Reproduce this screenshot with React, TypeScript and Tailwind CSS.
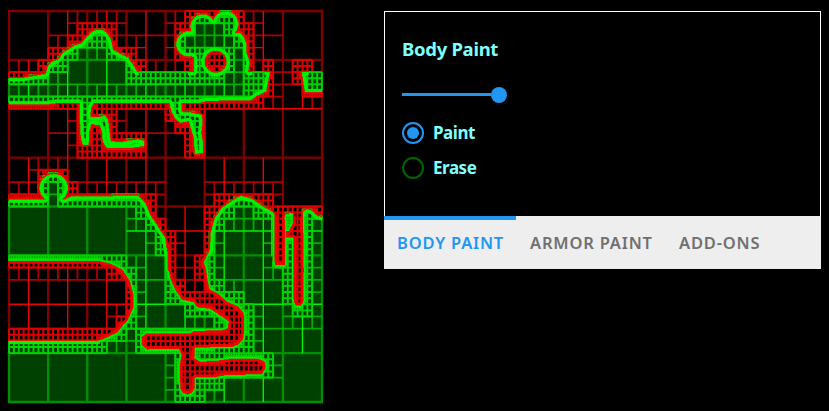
import React from "react";

type Pt = [number, number];

const MAP = { x: 9, y: 11, w: 313, h: 391 };
const N = 512;
const MIN_DEPTH = 3;
const MAX_DEPTH = 7;

const circle = (cx: number, cy: number, r: number): Pt[] =>
  Array.from({ length: 28 }, (_, i) => {
    const a = (i / 28) * Math.PI * 2;
    return [cx + Math.cos(a) * r, cy + Math.sin(a) * r] as Pt;
  });

// Terrain is built in order: solid shapes are added, hollow ones carved out.
const SHAPES: { solid: boolean; pts: Pt[] }[] = [
  // floating island
  { solid: true, pts: [[0, 78], [23, 78], [46, 74], [48, 66], [52, 62], [59, 59], [63, 53], [71, 48], [75, 45.5], [82, 43.5], [87, 37], [92, 32], [97, 30], [102, 30], [107, 33.5], [111, 40], [113, 50], [120, 54], [128, 58], [133, 65], [137, 72], [270, 72], [267.5, 83], [266, 91.5], [258, 95], [250.5, 100], [207, 101], [200, 102.5], [60, 102.5], [43, 104.5], [0, 104.5]] },
  { solid: true, pts: circle(202.7, 26.5, 12) },
  { solid: true, pts: circle(225.6, 24, 12.5) },
  { solid: true, pts: circle(213.5, 28, 7) },
  { solid: true, pts: circle(189, 44, 12.5) },
  { solid: true, pts: [[188, 33], [240, 33], [244, 38], [246.5, 45], [246, 52], [249.5, 62], [248, 72.5], [194, 72.5], [194.5, 57], [187, 55]] },
  { solid: false, pts: circle(215.7, 61.7, 11.3) },
  { solid: true, pts: [[302, 72], [330, 72], [330, 92], [305, 92]] },
  // hanging vines
  { solid: true, pts: [[80, 100], [95, 100], [91, 108], [90, 117], [100, 117], [105, 115.5], [108, 120], [109.5, 133], [110.5, 141.5], [120, 142.5], [138, 139.5], [144, 141], [144, 146], [133, 147.5], [107, 147.5], [103, 142], [102.5, 133], [100, 125], [91, 124], [89, 133], [89, 141], [88, 145], [83, 145], [81, 138], [80, 120]] },
  { solid: true, pts: [[169.5, 100], [180.5, 100], [181.5, 107], [181.5, 112], [191.5, 113], [201.5, 115], [202.5, 122], [201, 133], [202.5, 141], [202.5, 153], [195, 154], [194, 138], [191, 128], [189, 121], [180, 122.5], [175, 118], [171, 110]] },
  // ground
  { solid: true, pts: [[0, 199.5], [65, 199.5], [72, 196.5], [138, 196], [145, 203], [150, 215], [158, 227], [165, 238], [167.5, 255], [167.5, 270], [186, 290], [204, 262], [210, 250], [211, 233], [215, 218], [222, 208], [232, 201], [241, 196], [252, 199], [262, 206], [272, 212], [275, 215], [275, 265], [285.5, 265], [285.5, 231], [284, 220], [286, 214], [292.5, 213.5], [292.5, 224], [288.5, 231], [286, 231], [286, 238], [293.5, 238], [293.5, 300], [303, 300], [303, 212], [307, 209.5], [312, 211], [317, 216], [330, 219.5], [330, 410], [0, 410]] },
  { solid: true, pts: circle(53.7, 188, 14) },
  // river and tunnels
  { solid: false, pts: [[186, 200], [206, 255], [204, 262], [206.5, 270], [207, 276], [209.5, 289], [218, 293.5], [228, 302], [238, 306], [244, 313], [244.5, 332], [243, 340], [238, 345], [232, 347], [195, 347.7], [194.5, 358], [200, 361.5], [218, 360.5], [232, 358.3], [258, 358.3], [265, 361.5], [266, 368], [262, 374.3], [223, 375.7], [215, 377.7], [195, 377.7], [195, 388], [192, 393], [187.5, 395], [182.5, 393], [180, 388], [179.5, 365], [181.5, 355], [179, 349.5], [147, 349.7], [142, 345.5], [141.3, 337], [146.5, 333.3], [190, 333.3], [193.5, 331], [222, 330], [227.5, 328], [228.5, 321.5], [222, 317], [210, 309], [197, 307.5], [193.5, 302.3], [182, 300], [175, 290], [170, 278], [167.5, 265], [167.5, 250], [165, 238]] },
  // cave
  { solid: false, pts: [[0, 261], [100, 261], [112, 264], [123, 270], [130, 281], [133.8, 295], [133.5, 308], [128, 320], [117, 333], [103, 339.5], [98, 340.7], [0, 340.7]] },
  // shafts
  { solid: false, pts: [[274.5, 212], [283.5, 212], [285.5, 222], [285.5, 262], [283, 265.5], [277.5, 265.5], [274.5, 262]] },
  { solid: false, pts: [[293.8, 205], [303, 212], [304, 270], [303.5, 302], [301, 305.7], [296, 305.7], [293.8, 302]] },
];

function inside(px: number, py: number, p: Pt[]) {
  let hit = false;
  for (let i = 0, j = p.length - 1; i < p.length; j = i++) {
    const [xi, yi] = p[i];
    const [xj, yj] = p[j];
    if (yi > py !== yj > py && px < ((xj - xi) * (py - yi)) / (yj - yi) + xi) hit = !hit;
  }
  return hit;
}

// The level top of the island lies on a cell boundary and needs no finer cells.
const onFlatTop = (px: number, py: number) =>
  py > 59 && py < 77 && ((px > 138 && px < 188) || (px > 252 && px < 264) || px > 308);

function buildTerrain() {
  const sx = MAP.w / N;
  const sy = MAP.h / N;
  const grid = new Uint8Array(N * N);
  for (const s of SHAPES) {
    const xs = s.pts.map((p) => p[0]);
    const ys = s.pts.map((p) => p[1]);
    const x0 = Math.max(0, Math.floor((Math.min(...xs) - MAP.x) / sx));
    const x1 = Math.min(N, Math.ceil((Math.max(...xs) - MAP.x) / sx));
    const y0 = Math.max(0, Math.floor((Math.min(...ys) - MAP.y) / sy));
    const y1 = Math.min(N, Math.ceil((Math.max(...ys) - MAP.y) / sy));
    for (let y = y0; y < y1; y++) {
      for (let x = x0; x < x1; x++) {
        if (inside(MAP.x + (x + 0.5) * sx, MAP.y + (y + 0.5) * sy, s.pts)) grid[y * N + x] = s.solid ? 1 : 0;
      }
    }
  }

  const fill = ["", ""];
  const dim = ["", ""];
  const mid = ["", ""];
  const bright = ["", ""];
  const fine = ["", ""];
  const rim = ["", ""];

  const edge = (k: number, x1: number, y1: number, x2: number, y2: number, small: boolean) => {
    const vertical = x1 === x2;
    const c = (vertical ? x1 : y1) / 2;
    const d = `M${(MAP.x + x1 * sx).toFixed(2)} ${(MAP.y + y1 * sy).toFixed(2)}L${(MAP.x + x2 * sx).toFixed(2)} ${(MAP.y + y2 * sy).toFixed(2)}`;
    if (small) fine[k] += d;
    else if (c % 32 === 0 && (vertical || (c !== 64 && c !== 192))) dim[k] += d;
    else if (vertical ? c % 16 === 0 : c % 32 === 0 || c === 24 || c === 144) bright[k] += d;
    else mid[k] += d;
  };

  // A cell counts as mixed when it, or the thin margin round it, holds both materials.
  const mixed = (x: number, y: number, size: number, m: number) => {
    const k = grid[y * N + x];
    const xa = Math.max(0, x - m);
    const xb = Math.min(N, x + size + m);
    const ya = Math.max(0, y - m);
    const yb = Math.min(N, y + size + m);
    for (let j = ya; j < yb; j++) for (let i = xa; i < xb; i++) if (grid[j * N + i] !== k) return true;
    return false;
  };

  const visit = (x: number, y: number, size: number, depth: number) => {
    const cx = MAP.x + (x + size / 2) * sx;
    const cy = MAP.y + (y + size / 2) * sy;
    const margin = depth < 6 && !onFlatTop(cx, cy) ? 2 : 0;
    if (depth < MIN_DEPTH || (depth < MAX_DEPTH && mixed(x, y, size, margin))) {
      const h = size / 2;
      visit(x, y, h, depth + 1);
      visit(x + h, y, h, depth + 1);
      visit(x, y + h, h, depth + 1);
      visit(x + h, y + h, h, depth + 1);
      return;
    }
    const k = grid[(y + size / 2) * N + x + size / 2];
    const small = size <= 8;
    fill[k] += `M${(MAP.x + x * sx).toFixed(2)} ${(MAP.y + y * sy).toFixed(2)}h${(size * sx).toFixed(2)}v${(size * sy).toFixed(2)}h${(-size * sx).toFixed(2)}z`;
    edge(k, x, y, x + size, y, small);
    edge(k, x, y + size, x + size, y + size, small);
    edge(k, x, y, x, y + size, small);
    edge(k, x + size, y, x + size, y + size, small);
  };
  visit(0, 0, N, 0);

  // Bright rim that follows the surface on either side, gathered into row runs.
  // Below ground the hollow side carries the heavier rim.
  const near = (x: number, y: number, k: number) => {
    const px = MAP.x + x * sx;
    const py = MAP.y + y * sy;
    if (onFlatTop(px, py)) return false;
    const below = py > 256 || (px > 272 && px < 306 && py > 216);
    const floor = px < 100 && py > 330;
    let rx = k ? 5 : 3;
    if (below && !floor) rx = k ? 2 : 5;
    const ry = Math.max(2, rx - 1);
    for (let j = Math.max(0, y - ry); j <= Math.min(N - 1, y + ry); j++)
      for (let i = Math.max(0, x - rx); i <= Math.min(N - 1, x + rx); i++) {
        const a = (i - x) / rx;
        const b = (j - y) / ry;
        if (a * a + b * b <= 1.05 && grid[j * N + i] !== k) return true;
      }
    return false;
  };
  for (let y = 0; y < N; y++) {
    let start = 0;
    let cur = -1;
    for (let x = 0; x <= N; x++) {
      const k = x < N ? grid[y * N + x] : 0;
      const v = x < N && near(x, y, k) ? k : -1;
      if (v !== cur) {
        if (cur >= 0)
          rim[cur] += `M${(MAP.x + start * sx).toFixed(2)} ${(MAP.y + y * sy).toFixed(2)}h${((x - start) * sx).toFixed(2)}v${sy.toFixed(2)}h${(-(x - start) * sx).toFixed(2)}z`;
        cur = v;
        start = x;
      }
    }
  }
  return { fill, dim, mid, bright, fine, rim };
}

const T = buildTerrain();

function Terrain() {
  return (
    <svg className="block h-[411px] w-[384px] shrink-0" viewBox="0 0 384 411" fill="none">
      <path d={T.fill[1]} fill="#004000" />
      <path d={T.dim[0]} stroke="#800000" strokeWidth={2.3} strokeLinecap="square" />
      <path d={T.mid[0]} stroke="#ac0000" strokeWidth={1.8} />
      <path d={T.bright[0]} stroke="#f00000" strokeWidth={1.4} />
      <path d={T.fine[0]} stroke="#dc0000" strokeWidth={2} />
      <path d={T.dim[1]} stroke="#009000" strokeWidth={2.3} strokeLinecap="square" />
      <path d={T.mid[1]} stroke="#00ac00" strokeWidth={1.8} />
      <path d={T.bright[1]} stroke="#00f000" strokeWidth={1.4} />
      <path d={T.fine[1]} stroke="#00d400" strokeWidth={1.9} />
      <path d={T.rim[0]} fill="#f60000" stroke="#f60000" strokeWidth={0.2} />
      <path d={T.rim[1]} fill="#00f400" stroke="#00f400" strokeWidth={0.2} />
    </svg>
  );
}

function Radio({ label, checked }: { label: string; checked?: boolean }) {
  return (
    <label className="flex h-[35px] items-center gap-[9px]">
      <span className={"flex size-[22px] items-center justify-center rounded-full border-2 " + (checked ? "border-[#2196f3]" : "border-[#006400]")}>
        {checked && <span className="size-3 rounded-full bg-[#2196f3]" />}
      </span>
      <span className="text-[17px] font-bold leading-[22px] tracking-[-0.45px] text-[#80ffff]">{label}</span>
    </label>
  );
}

export default function App() {
  return (
    <div className="flex h-[411px] w-[829px] overflow-hidden bg-black font-['Noto_Sans','Open_Sans',sans-serif]">
      <Terrain />
      <section className="mt-[11px] flex h-[258px] w-[437px] flex-col">
        <div className="h-[205px] border border-b-0 border-white pl-[17px] pt-[24px]">
          <h2 className="h-[26px] text-[18.5px] font-bold leading-[26px] tracking-[-0.3px] text-[#80ffff]">Body Paint</h2>
          <div className="mt-[24px] flex h-[17px] w-[105px] items-center">
            <span className="h-[3px] flex-1 bg-[#2196f3]" />
            <span className="size-4 rounded-full bg-[#2196f3]" />
          </div>
          <div className="mt-3 flex flex-col">
            <Radio label="Paint" checked />
            <Radio label="Erase" />
          </div>
        </div>
        <nav className="flex h-[53px] bg-[#eeeeee] text-[16.5px] font-semibold tracking-[0.8px] text-[#707070]">
          <button className="flex w-[132px] items-center whitespace-nowrap border-t-4 border-[#2196f3] pb-[3px] pl-[13px] text-[#2196f3]">BODY PAINT</button>
          <button className="flex w-[150px] items-center whitespace-nowrap pl-[14px] pt-px">ARMOR PAINT</button>
          <button className="flex w-[110px] items-center whitespace-nowrap pl-[13px] pt-px">ADD-ONS</button>
        </nav>
      </section>
    </div>
  );
}
